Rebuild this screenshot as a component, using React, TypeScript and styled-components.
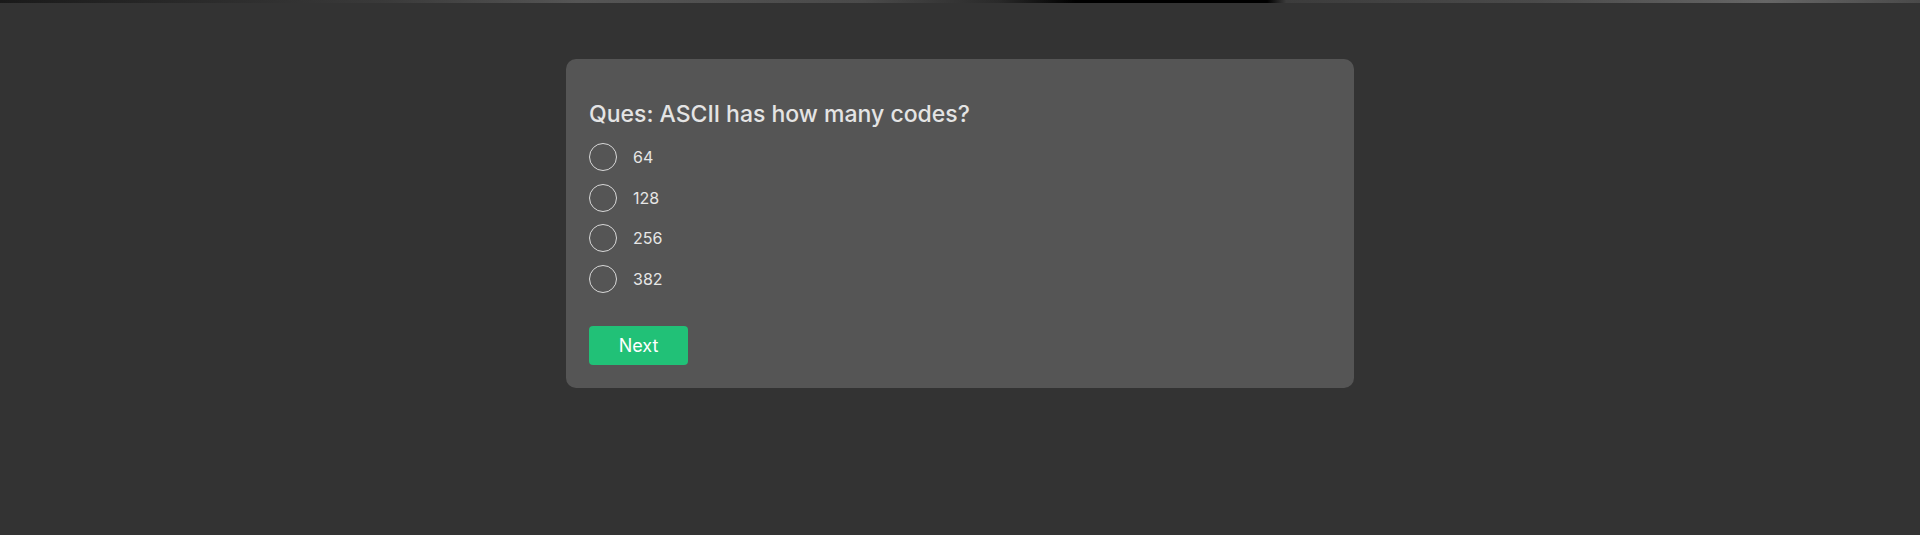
import React from "react";
import styled, { createGlobalStyle } from "styled-components";

const Global = createGlobalStyle`
  html, body { margin: 0; padding: 0; background: #333333; }
  body { font-family: "Inter", "Open Sans", sans-serif; }
`;

const TopStrip = styled.div`
  height: 3px;
  background: linear-gradient(90deg, #1a1a1a 0%, #3a3a3a 20%, #555 30%, #4a4a4a 45%, #2a2a2a 52%, #000 56%, #000 66%, #3c3c3c 67%, #4a4a4a 80%, #666 92%, #4a4a4a 100%);
`;

const Page = styled.div`
  min-height: 532px;
  padding-top: 56px;
  box-sizing: border-box;
`;

const Card = styled.div`
  width: 788px;
  margin: 0 auto;
  background: #555555;
  border-radius: 10px;
  padding: 40px 23px 23px;
  box-sizing: border-box;
`;

const Title = styled.h2`
  margin: 0 0 14px;
  font-size: 23px;
  line-height: 30px;
  font-weight: 500;
  color: #e4e4e4;
`;

const Options = styled.div`
  display: flex;
  flex-direction: column;
  gap: 12.5px;
`;

const Option = styled.label`
  display: flex;
  align-items: center;
  gap: 16px;
  height: 28px;
  cursor: pointer;
`;

const Circle = styled.span`
  width: 26px;
  height: 26px;
  border: 1px solid #d8d8d8;
  border-radius: 50%;
  flex-shrink: 0;
`;

const OptionText = styled.span`
  font-size: 16px;
  color: #e6e6e6;
`;

const Button = styled.button`
  margin-top: 33px;
  width: 99px;
  height: 39px;
  border: none;
  border-radius: 4px;
  background: #21c177;
  color: #ffffff;
  font-family: inherit;
  font-size: 18px;
  cursor: pointer;
`;

const options = ["64", "128", "256", "382"];

export default function App() {
  return (
    <>
      <Global />
      <TopStrip />
      <Page>
        <Card>
          <Title>Ques: ASCII has how many codes?</Title>
          <Options>
            {options.map((o) => (
              <Option key={o}>
                <Circle />
                <OptionText>{o}</OptionText>
              </Option>
            ))}
          </Options>
          <Button>Next</Button>
        </Card>
      </Page>
    </>
  );
}
